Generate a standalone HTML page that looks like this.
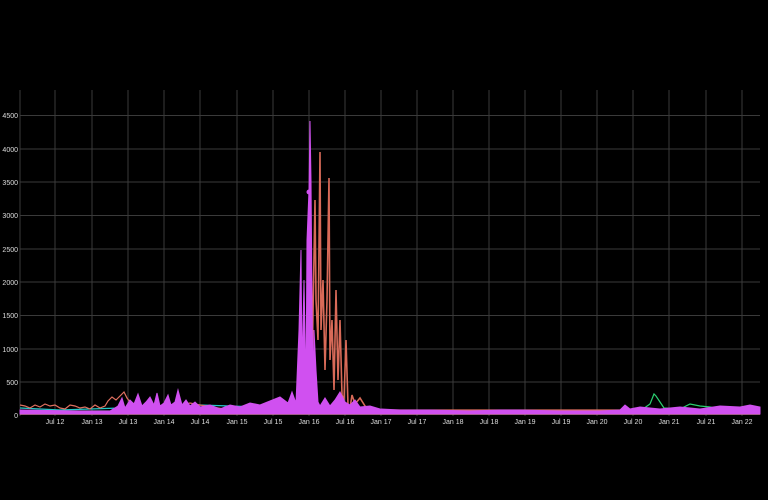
<!DOCTYPE html>
<html><head><meta charset="utf-8"><style>
html,body{margin:0;padding:0;background:#000;width:768px;height:500px;overflow:hidden}
svg{display:block}
text{font-family:"Liberation Sans",sans-serif;font-size:7px;fill:#ddd}
</style></head><body>
<svg width="768" height="500" viewBox="0 0 768 500">
<g stroke="#3a3a3a" stroke-width="1">
<line x1="20" y1="90" x2="20" y2="416"/>
<line x1="55" y1="90" x2="55" y2="416"/><line x1="92" y1="90" x2="92" y2="416"/>
<line x1="128" y1="90" x2="128" y2="416"/><line x1="164" y1="90" x2="164" y2="416"/>
<line x1="200" y1="90" x2="200" y2="416"/><line x1="237" y1="90" x2="237" y2="416"/>
<line x1="273" y1="90" x2="273" y2="416"/><line x1="309" y1="90" x2="309" y2="416"/>
<line x1="345" y1="90" x2="345" y2="416"/><line x1="381" y1="90" x2="381" y2="416"/>
<line x1="417" y1="90" x2="417" y2="416"/><line x1="453" y1="90" x2="453" y2="416"/>
<line x1="489" y1="90" x2="489" y2="416"/><line x1="525" y1="90" x2="525" y2="416"/>
<line x1="561" y1="90" x2="561" y2="416"/><line x1="597" y1="90" x2="597" y2="416"/>
<line x1="633" y1="90" x2="633" y2="416"/><line x1="669" y1="90" x2="669" y2="416"/>
<line x1="706" y1="90" x2="706" y2="416"/><line x1="742" y1="90" x2="742" y2="416"/>
<line x1="20" y1="115.5" x2="760" y2="115.5"/><line x1="20" y1="149" x2="760" y2="149"/>
<line x1="20" y1="182" x2="760" y2="182"/><line x1="20" y1="215.5" x2="760" y2="215.5"/>
<line x1="20" y1="249" x2="760" y2="249"/><line x1="20" y1="282" x2="760" y2="282"/>
<line x1="20" y1="315.5" x2="760" y2="315.5"/><line x1="20" y1="349" x2="760" y2="349"/>
<line x1="20" y1="382" x2="760" y2="382"/>
</g>
<g text-anchor="end">
<text x="18" y="118">4500</text><text x="18" y="152">4000</text><text x="18" y="185">3500</text>
<text x="18" y="218">3000</text><text x="18" y="252">2500</text><text x="18" y="285">2000</text>
<text x="18" y="318">1500</text><text x="18" y="352">1000</text><text x="18" y="385">500</text>
<text x="18" y="418">0</text>
</g>
<g text-anchor="middle">
<text x="55" y="424">Jul 12</text><text x="92" y="424">Jan 13</text><text x="128" y="424">Jul 13</text>
<text x="164" y="424">Jan 14</text><text x="200" y="424">Jul 14</text><text x="237" y="424">Jan 15</text>
<text x="273" y="424">Jul 15</text><text x="309" y="424">Jan 16</text><text x="345" y="424">Jul 16</text>
<text x="381" y="424">Jan 17</text><text x="417" y="424">Jul 17</text><text x="453" y="424">Jan 18</text>
<text x="489" y="424">Jul 18</text><text x="525" y="424">Jan 19</text><text x="561" y="424">Jul 19</text>
<text x="597" y="424">Jan 20</text><text x="633" y="424">Jul 20</text><text x="669" y="424">Jan 21</text>
<text x="706" y="424">Jul 21</text><text x="742" y="424">Jan 22</text>
</g>
<polyline fill="none" stroke="#e6c84a" stroke-width="1.5" points="20,414 760,414"/>
<polyline fill="none" stroke="#22c8c8" stroke-width="1.2" points="20,408 40,409 60,410 90,409 120,408 150,406 180,407 200,405 230,406 260,407 300,410 340,411 380,410 420,411 500,411 560,411 600,411 640,410 700,410 760,410"/>
<polyline fill="none" stroke="#2ad070" stroke-width="1.2" points="20,411 100,411 300,412 600,412 640,411 650,404 654,394 656,396 660,402 664,408 680,409 690,404 700,406 710,407 720,409 760,410"/>
<polyline fill="none" stroke="#e07060" stroke-width="1.2" points="20,405 25,406 30,408 35,405 40,407 45,404 50,406 55,405 60,408 65,409 70,405 75,406 80,408 85,407 90,409 95,405 100,408 105,406 108,401 112,397 116,400 120,396 124,392 127,398 130,402 135,404 140,405 150,408 170,408 190,403 200,405 230,410 300,410 760,410"/>
<polyline fill="none" stroke="#d86a58" stroke-width="1.6" points="308,410 312,370 315,200 316,300 318,340 320,152 321,330 323,280 325,370 327,300 329,178 330,360 332,320 334,390 336,290 338,380 340,320 342,395 344,400 346,340 348,405 350,408 352,395 355,404 360,398 365,406 370,410"/>
<path fill="#d050f0" stroke="#d050f0" stroke-width="1" d="M20,414 L20,410 L80,411 L110,411 L118,406 L122,398 L125,408 L130,400 L134,404 L138,394 L142,406 L146,402 L150,397 L154,405 L157,393 L160,406 L164,403 L168,395 L171,405 L175,402 L178,390 L182,405 L186,400 L190,406 L195,402 L200,407 L210,405 L220,409 L230,405 L240,407 L250,403 L260,405 L270,401 L280,397 L288,403 L292,392 L296,403 L299,330 L301,250 L302,370 L304,280 L306,390 L307,240 L309,190 L310,121 L311,180 L312,300 L313,385 L314,330 L316,370 L318,402 L320,406 L325,398 L330,406 L335,400 L340,392 L345,402 L350,405 L355,400 L360,407 L370,406 L380,409 L400,410 L430,410 L470,411 L500,410 L520,410 L560,411 L600,411 L620,410 L625,405 L630,409 L640,407 L660,409 L680,407 L700,409 L720,406 L740,407 L750,405 L760,407 L760,414 Z"/>
<circle cx="309" cy="192" r="2.5" fill="#d050f0"/>
</svg>
</body></html>
